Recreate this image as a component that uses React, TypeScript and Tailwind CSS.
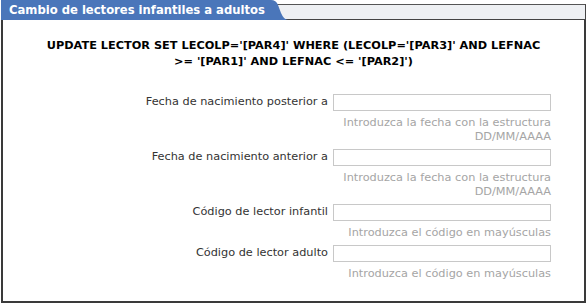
import React from "react";

const font = { fontFamily: '"DejaVu Sans", Verdana, sans-serif' };

function Row({ label, hint }: { label: string; hint: React.ReactNode }) {
  return (
    <div className="flex flex-col">
      <div className="flex items-center h-[17px]">
        <div className="flex-1 text-right pr-[5px] text-[11.3px] text-[#333333] whitespace-nowrap">{label}</div>
        <div className="w-[218px] h-[17px] border border-[#c8c8c8] bg-white" />
        <div className="w-[33px]" />
      </div>
      <div className="flex mt-[5px]">
        <div className="flex-1" />
        <div className="w-[218px] text-right text-[11.3px] leading-[14px] text-[#a5a5a5] whitespace-nowrap">{hint}</div>
        <div className="w-[33px]" />
      </div>
    </div>
  );
}

export default function App() {
  return (
    <div className="w-[587px] h-[303px] bg-white pl-[1px] pr-[1px] overflow-hidden" style={font}>
      <div className="flex h-[20px]">
        <div className="bg-[#4a76ba] h-[20px] pl-[8px] pr-[3px] text-white font-bold text-[11.6px] leading-[20px] whitespace-nowrap">
          Cambio de lectores infantiles a adultos
        </div>
        <svg width="20" height="20" viewBox="0 0 20 20" className="shrink-0">
          <rect x="0" y="4" width="20" height="16" fill="#eef0f3" />
          <line x1="0" y1="4.5" x2="20" y2="4.5" stroke="#555" strokeWidth="1" />
          <line x1="0" y1="19.5" x2="20" y2="19.5" stroke="#444" strokeWidth="1" />
          <path d="M0 0 H3 Q8 0 10 5 L13 13 Q16 20 20 20 H0 Z" fill="#4a76ba" />
        </svg>
        <div className="flex-1 mt-[4px] h-[16px] bg-[#eef0f3] border-t border-b border-r border-t-[#555] border-b-[#444] border-r-[#444]" />
      </div>
      <div className="h-[283px] border-l-2 border-r-2 border-b-2 border-[#3a3a3a] bg-white">
        <div className="pt-[18px] text-center font-bold text-[11.3px] leading-[16px] text-black">
          UPDATE LECTOR SET LECOLP='[PAR4]' WHERE (LECOLP='[PAR3]' AND LEFNAC
          <br />
          &gt;= '[PAR1]' AND LEFNAC &lt;= '[PAR2]')
        </div>
        <div className="mt-[24px] flex flex-col gap-[5px]">
          <Row
            label="Fecha de nacimiento posterior a"
            hint={<>Introduzca la fecha con la estructura<br />DD/MM/AAAA</>}
          />
          <Row
            label="Fecha de nacimiento anterior a"
            hint={<>Introduzca la fecha con la estructura<br />DD/MM/AAAA</>}
          />
          <Row label="Código de lector infantil" hint="Introduzca el código en mayúsculas" />
          <Row label="Código de lector adulto" hint="Introduzca el código en mayúsculas" />
        </div>
      </div>
    </div>
  );
}
